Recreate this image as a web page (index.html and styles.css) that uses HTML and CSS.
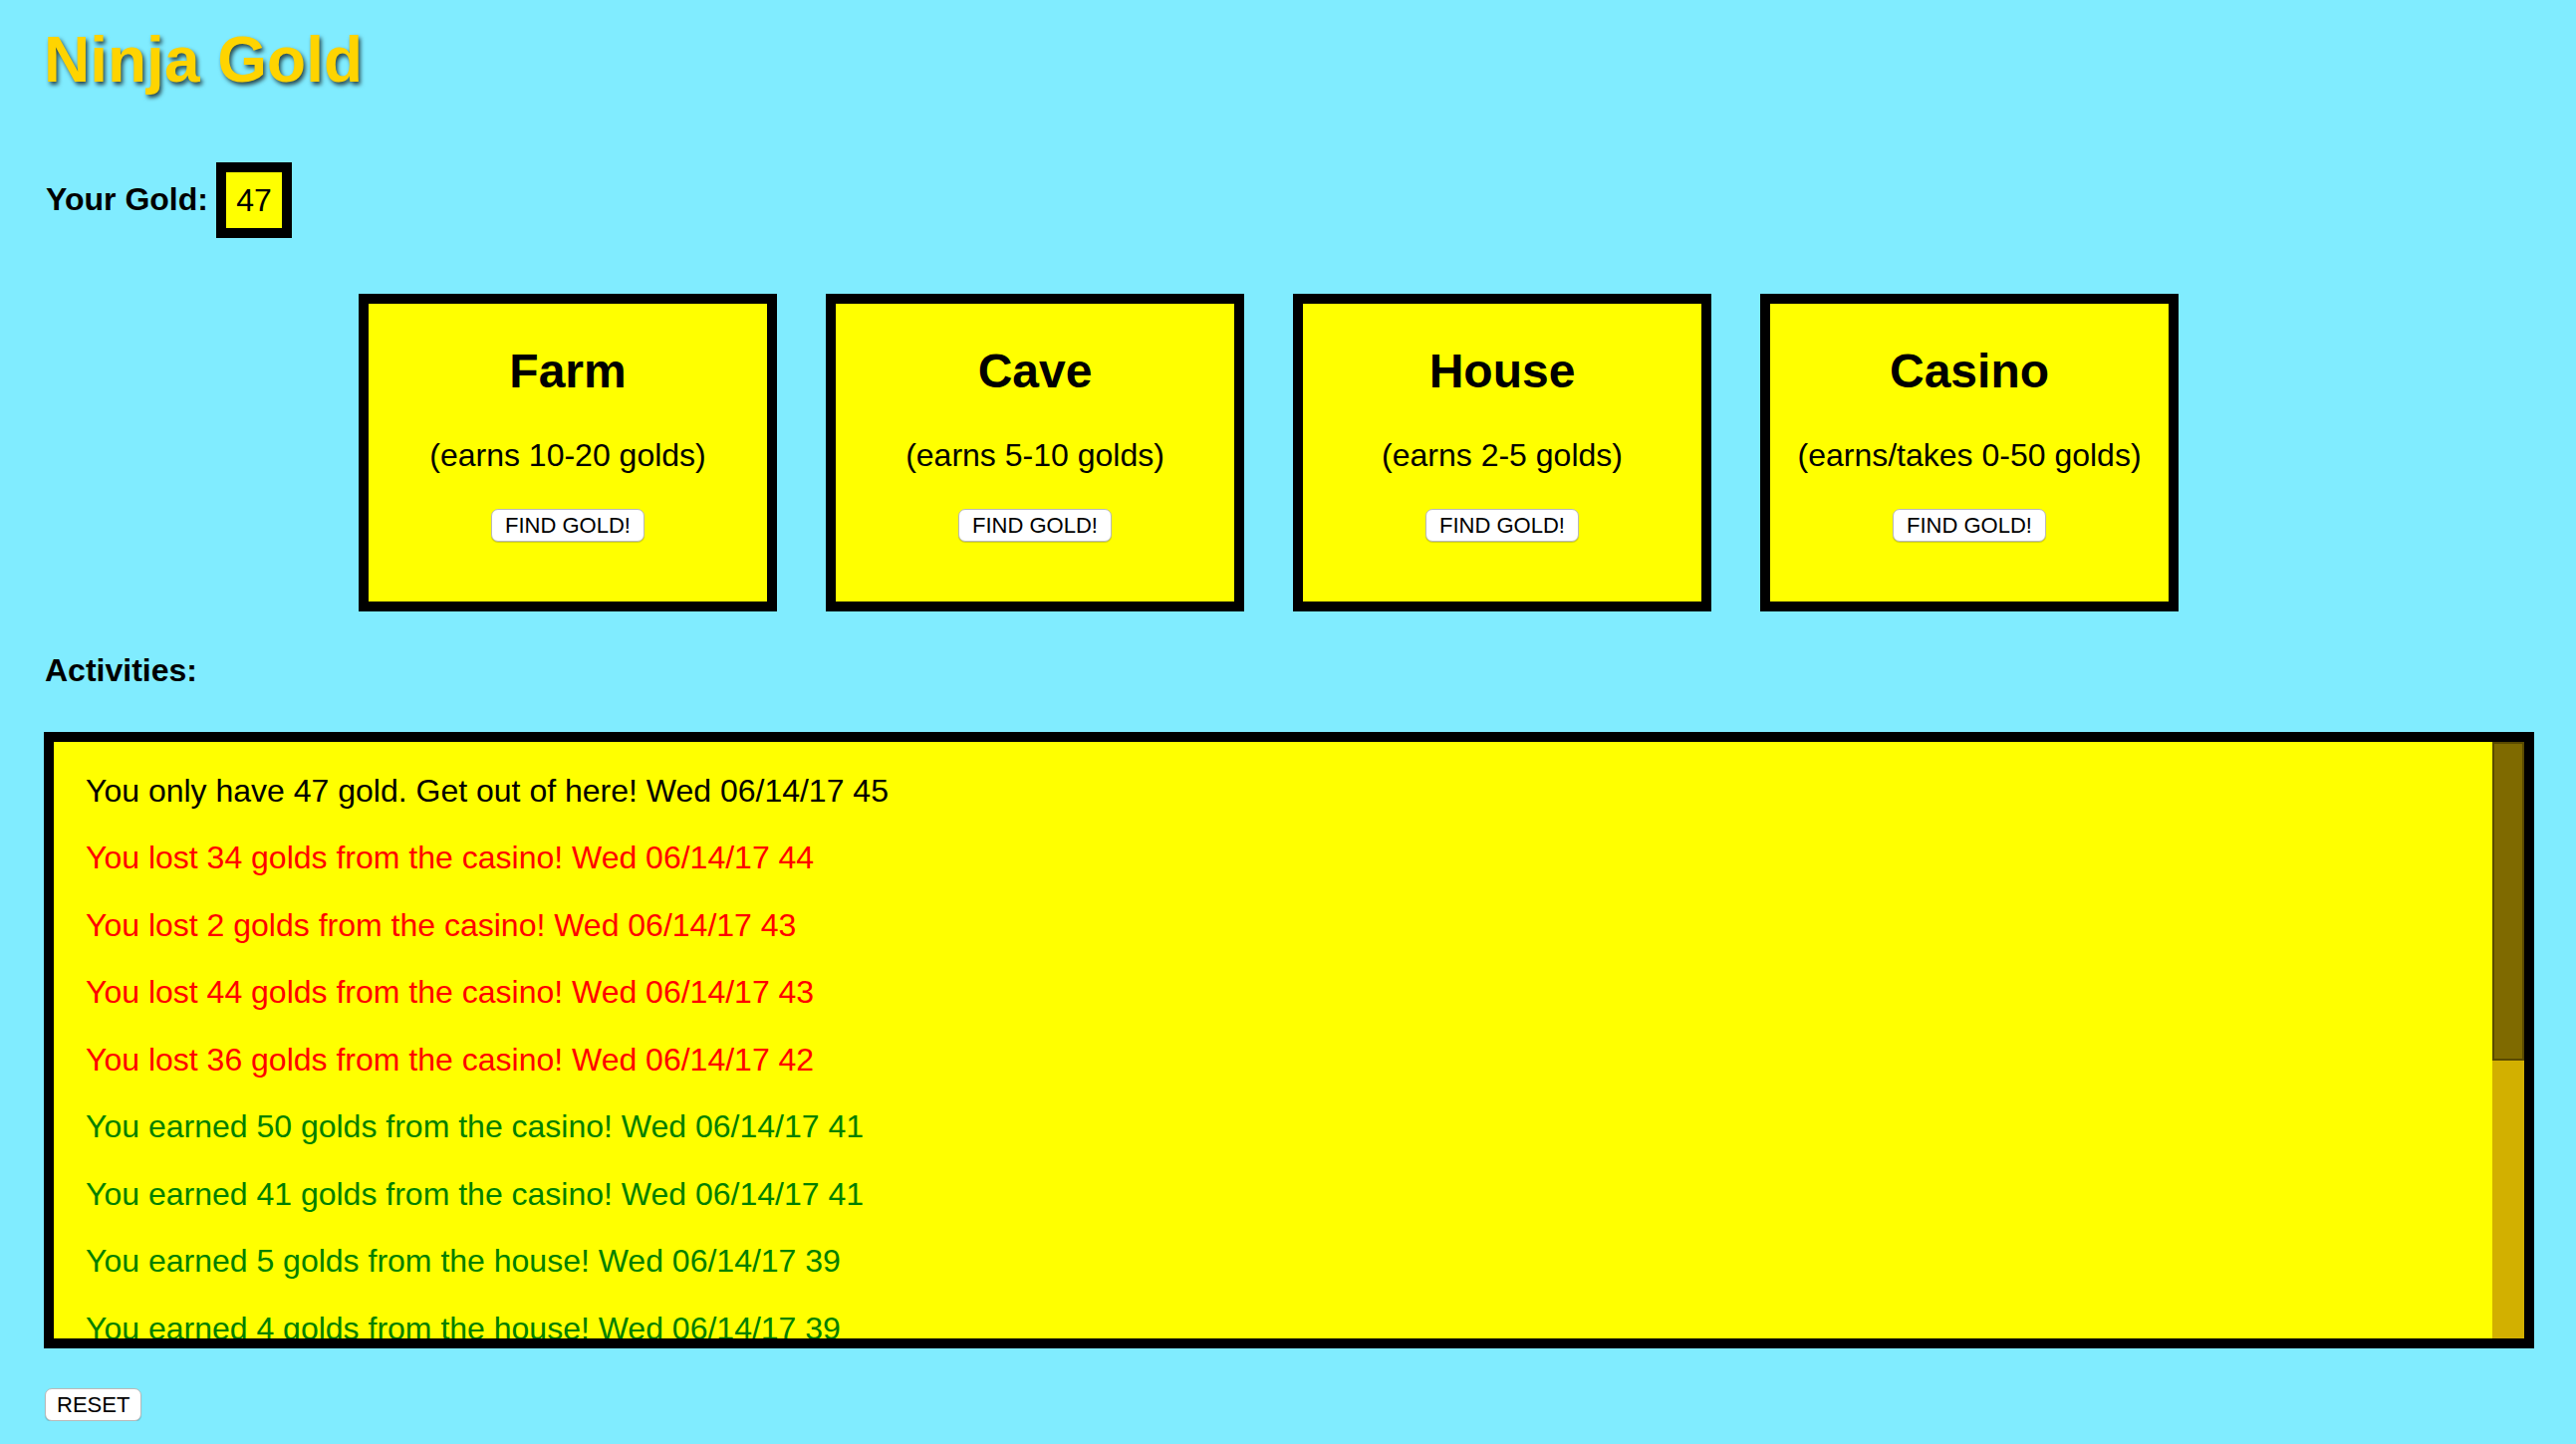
FILE: index.html
```html
<!DOCTYPE html>
<html>
<head>
<meta charset="utf-8">
<title>Ninja Gold</title>
<link rel="stylesheet" href="styles.css">
</head>
<body>
<div class="page">
  <h1 class="title">Ninja Gold</h1>
  <div class="gold-row">
    <span class="gold-label">Your Gold:</span>
    <span class="gold-box">47</span>
  </div>
  <div class="cards">
    <div class="card">
      <h2>Farm</h2>
      <p>(earns 10-20 golds)</p>
      <button class="btn">FIND GOLD!</button>
    </div>
    <div class="card">
      <h2>Cave</h2>
      <p>(earns 5-10 golds)</p>
      <button class="btn">FIND GOLD!</button>
    </div>
    <div class="card">
      <h2>House</h2>
      <p>(earns 2-5 golds)</p>
      <button class="btn">FIND GOLD!</button>
    </div>
    <div class="card">
      <h2>Casino</h2>
      <p>(earns/takes 0-50 golds)</p>
      <button class="btn">FIND GOLD!</button>
    </div>
  </div>
  <div class="act-label">Activities:</div>
  <div class="log">
    <div class="log-body">
      <p class="neutral">You only have 47 gold. Get out of here! Wed 06/14/17 45</p>
      <p class="lost">You lost 34 golds from the casino! Wed 06/14/17 44</p>
      <p class="lost">You lost 2 golds from the casino! Wed 06/14/17 43</p>
      <p class="lost">You lost 44 golds from the casino! Wed 06/14/17 43</p>
      <p class="lost">You lost 36 golds from the casino! Wed 06/14/17 42</p>
      <p class="earned">You earned 50 golds from the casino! Wed 06/14/17 41</p>
      <p class="earned">You earned 41 golds from the casino! Wed 06/14/17 41</p>
      <p class="earned">You earned 5 golds from the house! Wed 06/14/17 39</p>
      <p class="earned">You earned 4 golds from the house! Wed 06/14/17 39</p>
    </div>
    <div class="scrollbar">
      <div class="thumb"></div>
    </div>
  </div>
  <button class="btn reset">RESET</button>
</div>
</body>
</html>
```

FILE: styles.css
```css
html, body {
  margin: 0;
  padding: 0;
  background: #80ecff;
}

body {
  font-family: "Liberation Sans", Arial, Helvetica, sans-serif;
  font-size: 32px;
  color: #000;
}

.page {
  padding: 0 42px 0 44px;
  display: flex;
  flex-direction: column;
  align-items: flex-start;
}

.title {
  margin: 24px 0 0 0;
  font-size: 64px;
  font-weight: bold;
  line-height: 73.5px;
  color: #ffd400;
  text-shadow: 2px 3px 4px rgba(0, 0, 0, 0.7);
}

.gold-row {
  margin-top: 65px;
  display: flex;
  align-items: center;
  height: 76px;
}

.gold-label {
  font-weight: bold;
  line-height: 37px;
  margin-left: 2px;
}

.gold-box {
  margin-left: 8px;
  border: 10px solid #000;
  background: #ff0;
  width: 56px;
  height: 56px;
  line-height: 56px;
  text-align: center;
}

.cards {
  margin-top: 56px;
  margin-left: 316px;
  display: flex;
  gap: 49px;
}

.card {
  width: 400px;
  height: 299px;
  border: 10px solid #000;
  background: #ff0;
  text-align: center;
  display: flex;
  flex-direction: column;
  align-items: center;
}

.card h2 {
  margin: 40px 0 0 0;
  font-size: 48px;
  line-height: 55px;
  font-weight: bold;
}

.card p {
  margin: 39px 0 0 0;
  font-size: 32px;
  line-height: 37px;
}

.btn {
  font-family: "Liberation Sans", Arial, Helvetica, sans-serif;
  font-size: 22px;
  color: #000;
  background: #fff;
  border: 1px solid #b9b9b9;
  border-radius: 7px;
  box-shadow: 0 1px 1px rgba(0, 0, 0, 0.18);
  height: 33px;
  padding: 0 13px;
  line-height: 31px;
  box-sizing: border-box;
}

.card .btn {
  margin-top: 35px;
}

.act-label {
  margin-top: 41px;
  font-weight: bold;
  line-height: 37px;
  margin-left: 1px;
}

.log {
  margin-top: 43px;
  width: 2500px;
  height: 619px;
  box-sizing: border-box;
  border: 10px solid #000;
  background: #ff0;
  display: flex;
}

.log-body {
  flex: 1;
  overflow: hidden;
  padding: 0 32px;
}

.log-body p {
  margin: 32px 0;
  line-height: 35.5px;
  font-size: 32px;
  white-space: nowrap;
}

.scrollbar {
  width: 32px;
  flex: none;
  background: #d2b000;
}

.thumb {
  height: 320px;
  box-sizing: border-box;
  background: #7f6a00;
  border: 2px solid #5a4a00;
}

.neutral { color: #000; }
.lost { color: #ff0000; }
.earned { color: #008000; }

.reset {
  margin-top: 40px;
  margin-left: 1px;
  padding: 0 11px;
}
```
